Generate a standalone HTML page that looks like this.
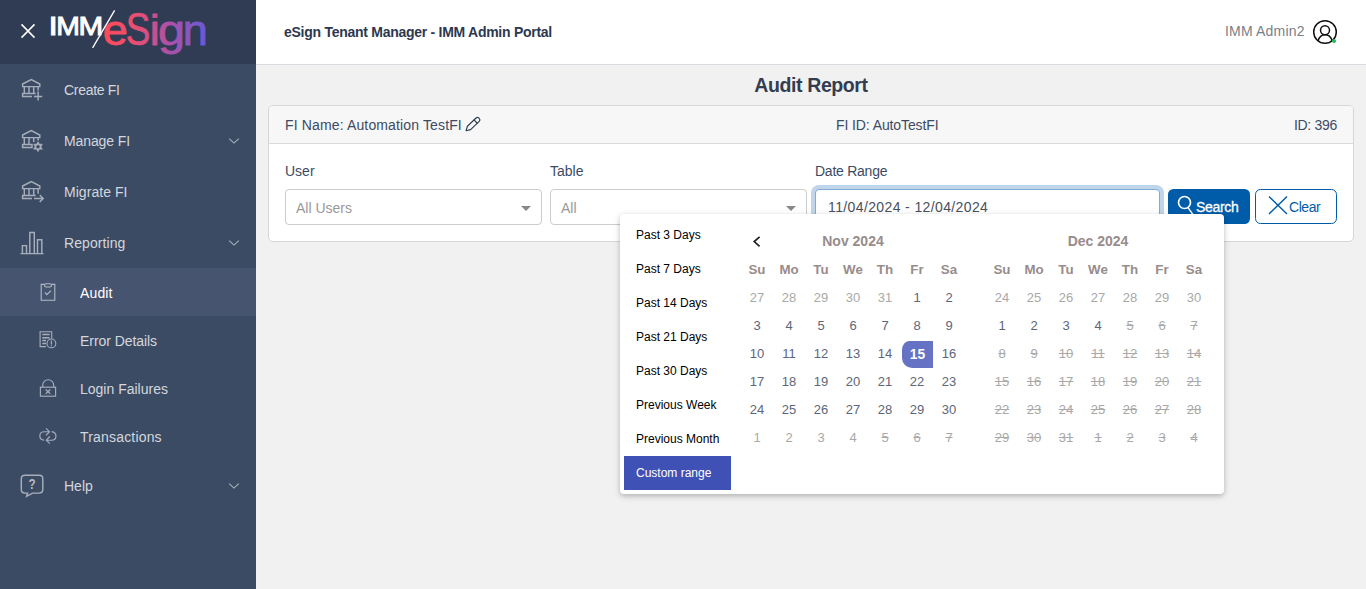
<!DOCTYPE html>
<html lang="en">
<head>
<meta charset="utf-8">
<title>eSign Tenant Manager - IMM Admin Portal</title>
<style>
*{box-sizing:border-box;margin:0;padding:0}
html,body{width:1366px;height:589px;overflow:hidden}
body{font-family:"Liberation Sans",sans-serif;background:#f1f1f1;color:#3c4b64;position:relative;font-size:14px}
.abs{position:absolute}
svg{overflow:visible}
/* sidebar */
#sidebar{position:absolute;left:0;top:0;width:256px;height:589px;background:#3c4b64}
#brand{position:absolute;left:0;top:0;width:256px;height:64px;background:#303c54}
.nav{position:absolute;left:0;width:256px;color:#d3d7de;font-size:14px}
.nav .lbl{position:absolute;left:64px;top:0;white-space:nowrap;line-height:16px}
.nav.sub .lbl{left:80px}
.nav.active{background:#465470;color:#fff}
#icons{position:absolute;left:0;top:0}
/* header */
#topbar{position:absolute;left:256px;top:0;width:1110px;height:65px;background:#fff;border-bottom:1px solid #d8dbe0}
#apptitle{letter-spacing:-0.27px;position:absolute;left:28px;top:24px;line-height:16px;font-weight:bold;font-size:14px;color:#2c384f;white-space:nowrap}
#user{letter-spacing:0.18px;position:absolute;left:969px;top:23px;line-height:16px;font-size:14px;color:#7b8087;white-space:nowrap}
/* content */
#pagetitle{position:absolute;left:256px;width:1110px;top:73px;line-height:24px;text-align:center;font-size:19.5px;letter-spacing:-0.4px;font-weight:bold;color:#323d50;white-space:nowrap}
#card{position:absolute;left:268px;top:105px;width:1086px;height:137px;background:#fff;border:1px solid #d5d6db;border-radius:5px}
#cardhead{position:absolute;left:0;top:0;width:1084px;height:38px;background:#f7f7f7;border-bottom:1px solid #d9dadd;border-radius:4px 4px 0 0;font-size:14px;color:#3c4b64}
#cardhead span{position:absolute;top:11px;line-height:16px;white-space:nowrap}
.flabel{position:absolute;top:57px;line-height:16px;font-size:14px;color:#3c4b64;white-space:nowrap}
.sel{position:absolute;top:83px;width:257px;height:36px;border:1px solid #ccc;border-radius:4px;background:#fff;font-size:14px;color:#999}
.sel b{position:absolute;left:10px;top:10px;line-height:16px;font-weight:normal;white-space:nowrap}
.sel i{position:absolute;right:10px;top:16px;border:5px solid transparent;border-top:5px solid #888;border-bottom:0;width:0;height:0}
#dateinp{position:absolute;left:546px;top:83px;width:345px;height:36px;border:1px solid #80abd6;border-radius:4px;background:#fff;box-shadow:0 0 0 4px #bfd5ea;font-size:14px;color:#49505c}
#dateinp b{letter-spacing:0.38px;position:absolute;left:12px;top:9px;line-height:16px;font-weight:normal;white-space:nowrap}
.btn{position:absolute;top:83px;height:35px;border-radius:5.5px;font-size:14px}
.btn b{position:absolute;line-height:16px;font-weight:normal;white-space:nowrap}
#bsearch{left:899px;width:82px;background:#005ca9;color:#fff}
#bclear{left:986px;width:82px;background:#fff;border:1px solid #005ca9;color:#005ca9}
/* picker */
#picker{position:absolute;left:620px;top:214px;width:604px;height:280px;background:#fff;border-radius:4px;box-shadow:0 2px 4px 0 rgba(0,0,0,.16),0 2px 8px 0 rgba(0,0,0,.12);font-size:12px;color:#000}
.rng{position:absolute;left:4px;width:107px;height:34px;padding:10px 0 0 12px;white-space:nowrap;line-height:14px}
.rng.act{background:#3f51b5;color:#fff}
.cal{position:absolute;top:15px;width:224px}
.cal .month{height:28px;line-height:24px;text-align:center;font-weight:bold;color:#988c8c;font-size:14px}
.cal .row{height:28px;display:flex}
.cal .row span{width:32px;height:27px;line-height:26px;text-align:center;font-size:13px;color:#5d667a}
.cal .row.hd span{font-weight:bold;color:#988c8c;font-size:13.33px;line-height:26px}
.cal.left .row span b{display:block;font-weight:inherit;}
.cal .row span.off{color:#a9a9a9}
.cal .row span.dis{color:#a9a9a9;text-decoration:line-through}
.cal .row span.sel15{background:#6672c4;color:#fff;font-weight:bold;border-radius:7px 0 0 10px / 9px 0 0 10px;font-size:13.8px;line-height:27px;width:31px;margin-left:1px}
</style>
</head>
<body>
<div id="sidebar">
  <div id="brand">
    <svg class="abs" style="left:0;top:0" width="256" height="64" viewBox="0 0 256 64">
      <defs><linearGradient id="lg" x1="104" y1="0" x2="205.5" y2="0" gradientUnits="userSpaceOnUse"><stop offset="0.000" stop-color="#ff4b58"/><stop offset="0.296" stop-color="#ea4f70"/><stop offset="0.502" stop-color="#c8508f"/><stop offset="0.670" stop-color="#a652ae"/><stop offset="0.847" stop-color="#8557c4"/><stop offset="1.000" stop-color="#6a58d6"/></linearGradient></defs>
      <path d="M21.5 24.4 L34.5 37.6 M34.5 24.4 L21.5 37.6" stroke="#fff" stroke-width="1.5" fill="none"/>
      <text y="35.15" font-family="Liberation Sans, sans-serif" font-size="25.8" fill="#fff" stroke="#fff" stroke-width="0.9"><tspan x="48.4" textLength="9.32" lengthAdjust="spacingAndGlyphs">I</tspan><tspan x="56.3" textLength="23.64" lengthAdjust="spacingAndGlyphs">M</tspan><tspan x="78.5" textLength="24.72" lengthAdjust="spacingAndGlyphs">M</tspan></text>
      
      <text y="45" font-family="Liberation Sans, sans-serif" fill="url(#lg)" stroke="url(#lg)" stroke-linejoin="round"><tspan x="102.65" font-size="42.5" stroke-width="0.85" textLength="25.05" lengthAdjust="spacingAndGlyphs">e</tspan><tspan x="125.87" font-size="47" stroke-width="0.65" textLength="24.61" lengthAdjust="spacingAndGlyphs">S</tspan><tspan x="149.65" font-size="42.5" stroke-width="0.85" textLength="10.00" lengthAdjust="spacingAndGlyphs">i</tspan><tspan x="157.9" font-size="42.5" stroke-width="0.85" textLength="27.06" lengthAdjust="spacingAndGlyphs">g</tspan><tspan x="182.65" font-size="42.5" stroke-width="0.85" textLength="25.05" lengthAdjust="spacingAndGlyphs">n</tspan></text>
      <path d="M114.6 10.3 L92.6 47.8" stroke="#fff" stroke-width="1.3" fill="none"/>
    </svg>
  </div>
  <div class="nav" style="top:64px;height:51px"><span class="lbl" style="top:18px;letter-spacing:-0.3px">Create FI</span></div>
  <div class="nav" style="top:115px;height:51px"><span class="lbl" style="top:18px;letter-spacing:-0.1px">Manage FI</span></div>
  <div class="nav" style="top:166px;height:51px"><span class="lbl" style="top:18px;letter-spacing:0.05px">Migrate FI</span></div>
  <div class="nav" style="top:217px;height:51px"><span class="lbl" style="top:18px;letter-spacing:0.08px">Reporting</span></div>
  <div class="nav sub active" style="top:268px;height:48px"><span class="lbl" style="top:17px;letter-spacing:0.15px">Audit</span></div>
  <div class="nav sub" style="top:316px;height:48px"><span class="lbl" style="top:17px;letter-spacing:-0.06px">Error Details</span></div>
  <div class="nav sub" style="top:364px;height:48px"><span class="lbl" style="top:17px">Login Failures</span></div>
  <div class="nav sub" style="top:412px;height:48px"><span class="lbl" style="top:17px;letter-spacing:0.18px">Transactions</span></div>
  <div class="nav" style="top:460px;height:51px"><span class="lbl" style="top:18px">Help</span></div>
<svg id="icons" width="256" height="589" viewBox="0 0 256 589" fill="none" stroke="#a7aebb" stroke-width="1.45" stroke-linejoin="miter">
  <!-- create fi -->
  <g>
    <path d="M22.6 84 L31.3 79.6 L39.8 84 V86.6 H22.6 Z M24.3 86.6 V93.4 M29 86.6 V93.4 M33.7 86.6 V93.4 M38.1 86.6 V90.4 M38.1 91.6 V100.4 M34 96.5 H42.2 M35.7 93.4 H22.6 V96.5 H32"/>
  </g>
  <!-- manage fi -->
  <g transform="translate(0,51)">
    <path d="M22.6 84 L31.3 79.6 L39.8 84 V86.6 H22.6 Z M24.3 86.6 V93.4 M29 86.6 V93.4 M33.7 86.6 V91 M38.1 86.6 V89.6 M22.6 93.4 H32 V96.5 H22.6 Z"/>
    <path d="M38.00 90.60 L39.50 93.10 L42.42 93.15 L41.00 95.70 L42.42 98.25 L39.50 98.30 L38.00 100.80 L36.50 98.30 L33.58 98.25 L35.00 95.70 L33.58 93.15 L36.50 93.10 Z" fill="#a7aebb" stroke="#a7aebb" stroke-width="0.5" stroke-linejoin="round"/>
    <circle cx="38" cy="95.7" r="1.75" fill="#3c4b64" stroke="none"/>
  </g>
  <!-- migrate fi -->
  <g transform="translate(0,102)">
    <path d="M22.6 84 L31.3 79.6 L39.8 84 V86.6 H22.6 Z M24.3 86.6 V93.4 M29 86.6 V93.4 M33.7 86.6 V93.4 M38.1 86.6 V91.8 M35.7 93.4 H22.6 V96.5 H32 M34 96.5 H43 M39.7 93 L43.2 96.5 L39.7 100"/>
  </g>
  <!-- reporting -->
  <path d="M20.5 253.6 H43.6 M22.4 253.6 V245.6 H26.5 V253.6 M29.8 253.6 V232.4 H34.3 V253.6 M37.5 253.6 V239.8 H41.8 V253.6"/>
  <!-- audit -->
  <g stroke="#b4bac5" stroke-width="1.1">
    <path d="M44.6 284.4 H41.2 V300.2 H54.8 V284.4 H51.4"/>
    <rect x="44.6" y="283.7" width="6.8" height="3.3" rx="1.6"/>
    <path d="M44.9 292.4 L46.8 294.6 L51 290.6"/>
  </g>
  <!-- error details -->
  <g stroke-width="1.1">
    <path d="M46 346.6 H40.1 V331.8 H51.7 V338.6"/>
    <path d="M42.3 334.6 H49.6 M42.3 337.8 H49.6 M42.3 340.6 H46 M42.3 343.6 H46" stroke-width="1.5"/>
    <circle cx="51.4" cy="343.4" r="4.4"/>
    <path d="M51.4 340.6 V344.4 M51.4 345.3 V346.3" stroke-width="1.2"/>
  </g>
  <!-- login failures -->
  <g stroke-width="1.15">
    <rect x="40.4" y="387.2" width="15.2" height="9"/>
    <path d="M42.7 387.2 V385.2 A5.5 5.5 0 0 1 53.7 385.2 V387.2"/>
    <path d="M45.7 389.5 L50.3 393.9 M50.3 389.5 L45.7 393.9" stroke-width="1.3"/>
  </g>
  <!-- transactions -->
  <g stroke-width="1.15">
    <path d="M44.2 440.3 C38.2 439.4 38.6 431.7 44.2 431.7 H49"/>
    <path d="M46 428.3 L49.5 431.7 L46 435.3"/>
    <path d="M51.6 431.6 C57.6 432.4 57.2 440.2 51.6 440.2 H46.8"/>
    <path d="M49.8 436.5 L46.3 440.2 L49.8 443.7"/>
  </g>
  <!-- help -->
  <g stroke-width="1.45">
    <path d="M27.6 493.1 H25 Q21.3 493.1 21.3 489.6 V478.9 Q21.3 475.3 25 475.3 H39.2 Q42.8 475.3 42.8 478.9 V489.6 Q42.8 493.1 39.2 493.1 H32.6 L26.6 496.3 Z"/>
  </g>
  <text x="0" y="0" transform="translate(32,488.8) scale(0.8,1)" text-anchor="middle" font-family="Liberation Sans, sans-serif" font-weight="bold" font-size="14.5" fill="#b4bac5" stroke="none">?</text>
  <!-- chevrons -->
  <g stroke="#a9afbb" stroke-width="1.1">
    <path d="M229.2 138.6 L234 143.1 L238.8 138.6"/>
    <path d="M229.2 240.6 L234 245.1 L238.8 240.6"/>
    <path d="M229.2 483.6 L234 488.1 L238.8 483.6"/>
  </g>
</svg>
</div>
<div id="topbar">
  <div id="apptitle">eSign Tenant Manager - IMM Admin Portal</div>
<svg class="abs" style="left:0;top:0" width="1110" height="64"><g transform="translate(-256,0)" fill="none" stroke="#111" stroke-width="1.5"><circle cx="1325" cy="32" r="11.3"/><circle cx="1325" cy="30.2" r="4.5"/><path d="M1318 41 C1319.5 35.8 1322.5 34.8 1325 34.8 C1327.5 34.8 1330.5 35.8 1332.2 40.6"/></g><circle cx="1078" cy="41" r="2.1" fill="#2eb85c"/></svg>
  <div id="user">IMM Admin2</div>
</div>
<div id="pagetitle">Audit Report</div>
<div id="card">
  <div id="cardhead">
    <span style="left:16px;letter-spacing:0.14px">FI Name: Automation TestFI</span>
    <svg class="abs" style="left:0;top:0" width="300" height="38"><g fill="none" stroke="#2f3b52" stroke-width="1.15" stroke-linejoin="round" stroke-linecap="round" transform="translate(197.1,24.7) rotate(-43.7)"><path d="M0 0 L4 -2.3 H16 Q17.9 -2.3 17.9 -0.5 V0.5 Q17.9 2.3 16 2.3 H4 Z"/><path d="M13.2 -2.3 V2.3"/></g></svg>
    <span style="left:567px;letter-spacing:-0.1px">FI ID: AutoTestFI</span>
    <span style="right:16px;letter-spacing:-0.3px">ID: 396</span>
  </div>
  <div class="flabel" style="left:16px">User</div>
  <div class="flabel" style="left:281px">Table</div>
  <div class="flabel" style="left:546px;letter-spacing:-0.25px">Date Range</div>
  <div class="sel" style="left:16px"><b>All Users</b><i></i></div>
  <div class="sel" style="left:281px"><b>All</b><i></i></div>
  <div id="dateinp"><b>11/04/2024 - 12/04/2024</b></div>
  <div class="btn" id="bsearch"><svg class="abs" style="left:0;top:0" width="82" height="36"><g fill="none" stroke="#fff" stroke-width="1.65" stroke-linecap="round"><circle cx="16.5" cy="13.5" r="6"/><path d="M20 18.6 L25 25.6" stroke-width="1.5"/></g></svg><b style="left:28px;top:9.6px;letter-spacing:-0.3px;-webkit-text-stroke:0.3px #fff">Search</b></div>
  <div class="btn" id="bclear"><svg class="abs" style="left:-1px;top:-1px" width="82" height="36"><path d="M14 7.5 L32 25 M32 7.5 L14 25" fill="none" stroke="#005ca9" stroke-width="1.45"/></svg><b style="left:33px;top:8.6px;letter-spacing:-0.45px">Clear</b></div>
</div>
<div id="picker">
  <div class="rng" style="top:4px">Past 3 Days</div>
  <div class="rng" style="top:38px">Past 7 Days</div>
  <div class="rng" style="top:72px">Past 14 Days</div>
  <div class="rng" style="top:106px">Past 21 Days</div>
  <div class="rng" style="top:140px">Past 30 Days</div>
  <div class="rng" style="top:174px">Previous Week</div>
  <div class="rng" style="top:208px">Previous Month</div>
  <div class="rng act" style="top:242px">Custom range</div>
<svg class="abs" style="left:0;top:0" width="604" height="280"><path d="M139.6 22.8 L134.2 27.6 L139.6 32.4" fill="none" stroke="#222" stroke-width="1.7"/></svg>
<div class="cal left" style="left:121px">
<div class="month">Nov 2024</div>
<div class="row hd"><span><b>Su</b></span><span><b>Mo</b></span><span><b>Tu</b></span><span><b>We</b></span><span><b>Th</b></span><span><b>Fr</b></span><span><b>Sa</b></span></div>
<div class="row"><span class="off"><b>27</b></span><span class="off"><b>28</b></span><span class="off"><b>29</b></span><span class="off"><b>30</b></span><span class="off"><b>31</b></span><span><b>1</b></span><span><b>2</b></span></div>
<div class="row"><span><b>3</b></span><span><b>4</b></span><span><b>5</b></span><span><b>6</b></span><span><b>7</b></span><span><b>8</b></span><span><b>9</b></span></div>
<div class="row"><span><b>10</b></span><span><b>11</b></span><span><b>12</b></span><span><b>13</b></span><span><b>14</b></span><span class="sel15"><b>15</b></span><span><b>16</b></span></div>
<div class="row"><span><b>17</b></span><span><b>18</b></span><span><b>19</b></span><span><b>20</b></span><span><b>21</b></span><span><b>22</b></span><span><b>23</b></span></div>
<div class="row"><span><b>24</b></span><span><b>25</b></span><span><b>26</b></span><span><b>27</b></span><span><b>28</b></span><span><b>29</b></span><span><b>30</b></span></div>
<div class="row"><span class="off"><b>1</b></span><span class="off"><b>2</b></span><span class="off"><b>3</b></span><span class="off"><b>4</b></span><span class="dis"><b>5</b></span><span class="dis"><b>6</b></span><span class="dis"><b>7</b></span></div>
</div>
<div class="cal" style="left:366px">
<div class="month">Dec 2024</div>
<div class="row hd"><span>Su</span><span>Mo</span><span>Tu</span><span>We</span><span>Th</span><span>Fr</span><span>Sa</span></div>
<div class="row"><span class="off">24</span><span class="off">25</span><span class="off">26</span><span class="off">27</span><span class="off">28</span><span class="off">29</span><span class="off">30</span></div>
<div class="row"><span>1</span><span>2</span><span>3</span><span>4</span><span class="dis">5</span><span class="dis">6</span><span class="dis">7</span></div>
<div class="row"><span class="dis">8</span><span class="dis">9</span><span class="dis">10</span><span class="dis">11</span><span class="dis">12</span><span class="dis">13</span><span class="dis">14</span></div>
<div class="row"><span class="dis">15</span><span class="dis">16</span><span class="dis">17</span><span class="dis">18</span><span class="dis">19</span><span class="dis">20</span><span class="dis">21</span></div>
<div class="row"><span class="dis">22</span><span class="dis">23</span><span class="dis">24</span><span class="dis">25</span><span class="dis">26</span><span class="dis">27</span><span class="dis">28</span></div>
<div class="row"><span class="dis">29</span><span class="dis">30</span><span class="dis">31</span><span class="dis">1</span><span class="dis">2</span><span class="dis">3</span><span class="dis">4</span></div>
</div>
</div>
</body>
</html>
